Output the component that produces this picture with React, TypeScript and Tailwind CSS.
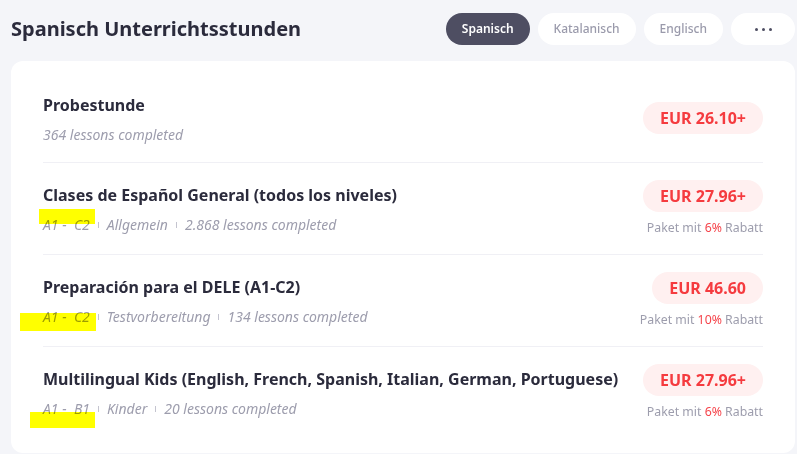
import { Fragment } from "react";

interface Course {
  title: string;
  meta: string[];
  price: string;
  discount?: string;
  mark?: string;
}

const courses: Course[] = [
  { title: "Probestunde", meta: ["364 lessons completed"], price: "EUR 26.10+" },
  {
    title: "Clases de Español General (todos los niveles)",
    meta: ["A1 -\u00a0 C2", "Allgemein", "2.868 lessons completed"],
    price: "EUR 27.96+",
    discount: "6%",
    mark: "left-[-4px] top-[-6px] w-[56px] h-[15px]",
  },
  {
    title: "Preparación para el DELE (A1-C2)",
    meta: ["A1 -\u00a0 C2", "Testvorbereitung", "134 lessons completed"],
    price: "EUR 46.60",
    discount: "10%",
    mark: "left-[-23px] top-[6px] w-[76px] h-[18px]",
  },
  {
    title: "Multilingual Kids (English, French, Spanish, Italian, German, Portuguese)",
    meta: ["A1 -\u00a0 B1", "Kinder", "20 lessons completed"],
    price: "EUR 27.96+",
    discount: "6%",
    mark: "left-[-13px] top-[13px] w-[65px] h-[16px]",
  },
];

const tabs = ["Spanisch", "Katalanisch", "Englisch"];

export default function App() {
  return (
    <div className="min-h-[454px] w-[797px] bg-[#f4f5f9] pl-[11px] pr-[2px] font-['Noto_Sans',sans-serif]">
      {/* Header */}
      <div className="flex h-[61px] items-center justify-between pb-[3px]">
        <h1 className="text-[20px] font-bold text-[#2b2b3c]">Spanisch Unterrichtsstunden</h1>
        <div className="flex gap-2">
          {tabs.map((t, i) => (
            <button
              key={t}
              className={`h-8 rounded-full px-4 text-[12px] ${
                i === 0 ? "bg-[#4e4e62] font-semibold text-white" : "bg-white font-medium text-[#9a9aab]"
              }`}
            >
              {t}
            </button>
          ))}
          <button className="flex h-8 w-16 items-center justify-center gap-[4px] rounded-full bg-white">
            <span className="h-[3px] w-[3px] rounded-full bg-[#4e4e62]" />
            <span className="h-[3px] w-[3px] rounded-full bg-[#4e4e62]" />
            <span className="h-[3px] w-[3px] rounded-full bg-[#4e4e62]" />
          </button>
        </div>
      </div>

      {/* Card */}
      <div className="rounded-xl bg-white px-8 pb-[15px] pt-[14px]">
        {courses.map((c, idx) => (
          <div
            key={idx}
            className={`flex items-center justify-between gap-4 pb-[18px] pt-[17px] ${
              idx > 0 ? "border-t border-[#f0f0f5]" : ""
            }`}
          >
            <div className="-mb-px mt-px min-w-0">
              <p className="whitespace-nowrap text-[16px] font-bold leading-6 text-[#2b2b3c]">{c.title}</p>
              <div className="relative mt-2 flex items-center text-[14px] italic leading-5 text-[#9d9dad]">
                {c.mark && <span className={`absolute bg-[#ffff00] mix-blend-multiply ${c.mark}`} />}
                {c.meta.map((m, i) => (
                  <Fragment key={i}>
                    {i > 0 && <span className="mx-2 h-[6px] w-px bg-[#c4c4cf]" />}
                    <span className="whitespace-pre">{m}</span>
                  </Fragment>
                ))}
              </div>
            </div>
            <div className="flex shrink-0 flex-col items-end">
              <span className="flex h-8 items-center rounded-full bg-[#fff0f0] px-[17px] text-[16px] font-bold text-[#f53b3f]">
                {c.price}
              </span>
              {c.discount && (
                <p className="mt-2 text-[12.3px] leading-4 text-[#9d9dad]">
                  Paket mit <span className="text-[#f5434a]">{c.discount}</span> Rabatt
                </p>
              )}
            </div>
          </div>
        ))}
      </div>
    </div>
  );
}
